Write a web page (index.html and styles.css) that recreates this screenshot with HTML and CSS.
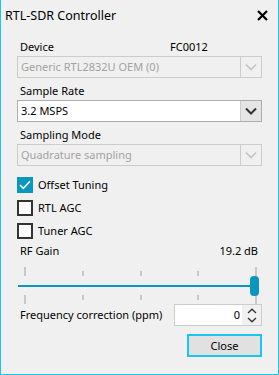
FILE: index.html
```html
<!DOCTYPE html>
<html lang="en">
<head>
    <meta charset="UTF-8">
    <title>RTL-SDR Controller</title>
    <link rel="stylesheet" href="styles.css">
</head>
<body>
    <div class="window">
        <div class="titlebar">
            <span class="title">RTL-SDR Controller</span>
            <span class="close-x">
                <svg width="11" height="11" viewBox="0 0 11 11"><path d="M1 1 L10 10 M10 1 L1 10" stroke="#000" stroke-width="2.2"/></svg>
            </span>
        </div>

        <div class="content">
            <div class="label-row first">
                <span>Device</span>
                <span class="tuner">FC0012</span>
            </div>
            <div class="combo disabled">
                <span class="combo-text">Generic RTL2832U OEM (0)</span>
                <span class="combo-btn">
                    <svg width="12" height="8" viewBox="0 0 12 8"><path d="M1 1.5 L6 6.5 L11 1.5" fill="none" stroke="#c4c4c4" stroke-width="1.6"/></svg>
                </span>
            </div>

            <div class="label-row">
                <span>Sample Rate</span>
            </div>
            <div class="combo">
                <span class="combo-text">3.2 MSPS</span>
                <span class="combo-btn">
                    <svg width="12" height="8" viewBox="0 0 12 8"><path d="M1 1.5 L6 6.5 L11 1.5" fill="none" stroke="#333" stroke-width="2"/></svg>
                </span>
            </div>

            <div class="label-row">
                <span>Sampling Mode</span>
            </div>
            <div class="combo disabled">
                <span class="combo-text">Quadrature sampling</span>
                <span class="combo-btn">
                    <svg width="12" height="8" viewBox="0 0 12 8"><path d="M1 1.5 L6 6.5 L11 1.5" fill="none" stroke="#c4c4c4" stroke-width="1.6"/></svg>
                </span>
            </div>

            <div class="checks">
                <label class="check">
                    <span class="box checked">
                        <svg width="12" height="10" viewBox="0 0 12 10"><path d="M1 5 L4.3 8.3 L11 1.3" fill="none" stroke="#fff" stroke-width="1.6"/></svg>
                    </span>
                    Offset Tuning
                </label>
                <label class="check">
                    <span class="box"></span>
                    RTL AGC
                </label>
                <label class="check">
                    <span class="box"></span>
                    Tuner AGC
                </label>
            </div>

            <div class="label-row gain-row">
                <span>RF Gain</span>
                <span>19.2 dB</span>
            </div>

            <div class="slider">
                <div class="ticks top">
                    <span class="tick long"></span>
                    <span class="tick"></span>
                    <span class="tick"></span>
                    <span class="tick"></span>
                    <span class="tick long"></span>
                </div>
                <div class="track">
                    <span class="thumb"></span>
                </div>
                <div class="ticks bottom">
                    <span class="tick long"></span>
                    <span class="tick"></span>
                    <span class="tick"></span>
                    <span class="tick"></span>
                    <span class="tick long"></span>
                </div>
            </div>

            <div class="freq-row">
                <span class="freq-label">Frequency correction (ppm)</span>
                <div class="spin">
                    <span class="spin-value">0</span>
                    <span class="spin-btns">
                        <svg width="10" height="6" viewBox="0 0 10 6"><path d="M1 5 L5 1.2 L9 5" fill="none" stroke="#333" stroke-width="1.3"/></svg>
                        <svg width="10" height="6" viewBox="0 0 10 6"><path d="M1 1 L5 4.8 L9 1" fill="none" stroke="#333" stroke-width="1.3"/></svg>
                    </span>
                </div>
            </div>

            <div class="footer">
                <button class="close-btn">Close</button>
            </div>
        </div>
    </div>
</body>
</html>
```

FILE: styles.css
```css
body {
    margin: 0;
    font-family: "Noto Sans", "Open Sans", sans-serif;
    font-size: 11px;
    color: #000;
    background: #f0f0f0;
}
.window {
    width: 277px;
    height: 374px;
    background: #f0f0f0;
    border: 1px solid #1bc6ee;
    border-top: none;
    overflow: hidden;
}
.titlebar {
    height: 34px;
    display: flex;
    align-items: flex-start;
    justify-content: space-between;
    padding: 0 10px 0 4px;
}
.title {
    font-size: 12.5px;
    line-height: 16px;
    margin-top: 8px;
}
.close-x {
    display: flex;
    margin-top: 10px;
}
.content {
    padding: 0 16px;
}
.label-row {
    display: flex;
    justify-content: space-between;
    padding: 0 4px 0 3px;
    height: 16px;
    line-height: 16px;
    margin: 5px 0 1px;
    white-space: nowrap;
}
.label-row.first {
    margin-top: 5px;
}
.label-row .tuner {
    width: 88px;
}
.combo {
    height: 20px;
    border: 1px solid #adadad;
    background: #fff;
    display: flex;
    align-items: stretch;
}
.combo.disabled {
    border-color: #cccccc;
    background: #f0f0f0;
    color: #a2a2a2;
}
.combo-text {
    flex: 1;
    padding-left: 3px;
    line-height: 20px;
}
.combo-btn {
    width: 20px;
    border-left: 1px solid #cccccc;
    background: #e5e5e5;
    display: flex;
    align-items: center;
    justify-content: center;
}
.combo.disabled .combo-btn {
    background: #f0f0f0;
}
.checks {
    margin-top: 11px;
    display: flex;
    flex-direction: column;
    gap: 7px;
}
.check {
    display: flex;
    align-items: center;
    gap: 5px;
    height: 16px;
    line-height: 16px;
}
.box {
    width: 12px;
    height: 12px;
    border: 2px solid #333;
    background: #fff;
    display: flex;
    align-items: center;
    justify-content: center;
}
.box.checked {
    border-color: #0a97bf;
    background: #0a97bf;
}
.gain-row {
    margin-top: 4px;
}
.slider {
    margin-top: 8px;
    padding: 0 3px 0 1px;
}
.ticks {
    display: flex;
    justify-content: space-between;
    padding: 0 2px 0 6px;
    height: 9px;
}
.ticks.top {
    align-items: flex-end;
}
.ticks.bottom {
    align-items: flex-start;
}
.tick {
    width: 2px;
    height: 5px;
    background: #c7c7c7;
}
.tick.long {
    height: 9px;
}
.track {
    height: 2px;
    background: #0a97bf;
    margin: 9px 0 8px;
    position: relative;
}
.thumb {
    position: absolute;
    right: 0;
    top: -9px;
    width: 9px;
    height: 20px;
    border-radius: 4px;
    background: #0a97bf;
}
.freq-row {
    display: flex;
    align-items: center;
    justify-content: space-between;
    padding-left: 3px;
    white-space: nowrap;
}
.freq-label {
    margin-top: -2px;
}
.spin {
    width: 86px;
    height: 20px;
    border: 1px solid #cccccc;
    background: #fff;
    display: flex;
}
.spin-value {
    flex: 1;
    text-align: right;
    line-height: 20px;
    padding-right: 2px;
}
.spin-btns {
    width: 19px;
    background: #f0f0f0;
    display: flex;
    flex-direction: column;
    align-items: center;
    justify-content: center;
    gap: 3px;
}
.footer {
    display: flex;
    justify-content: flex-end;
    margin-top: 8px;
}
.close-btn {
    width: 75px;
    height: 23px;
    border: 2px solid #1bc6ee;
    background: #e1e1e1;
    font-family: inherit;
    font-size: 11px;
    color: #000;
    padding: 0;
}
```
